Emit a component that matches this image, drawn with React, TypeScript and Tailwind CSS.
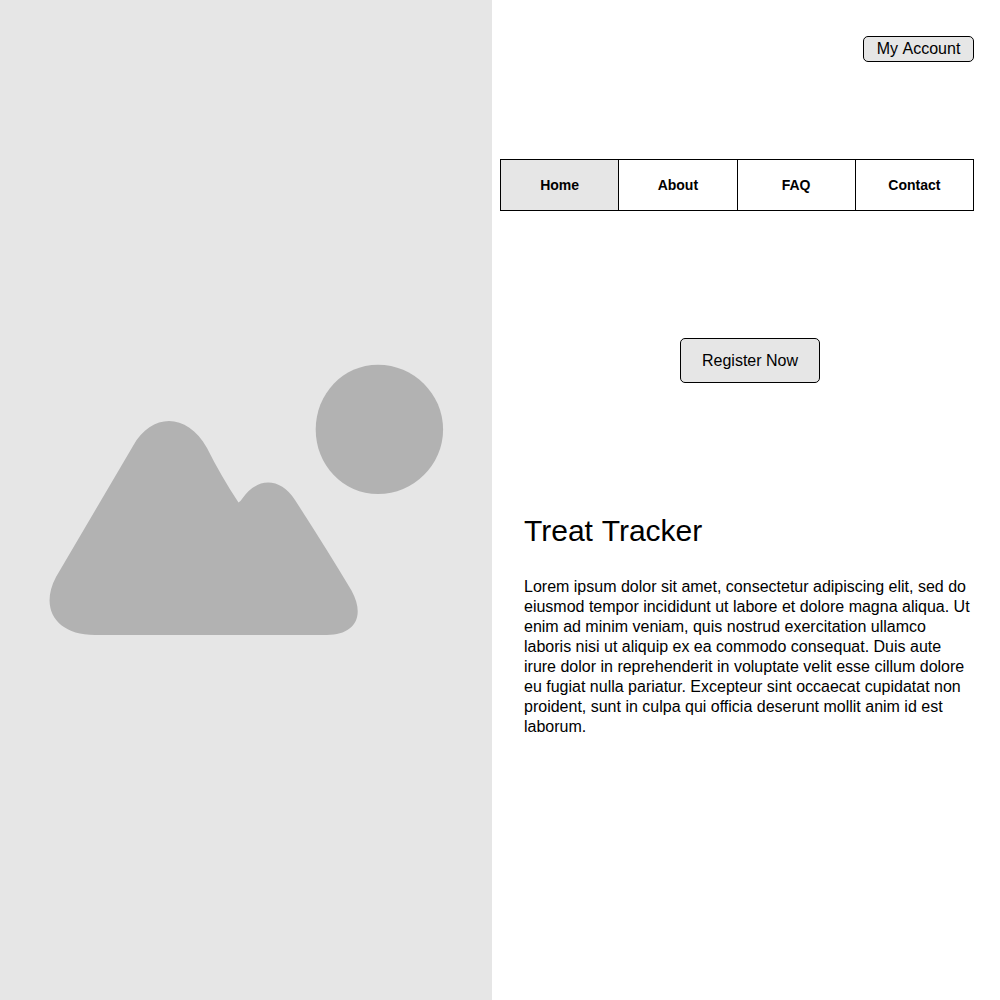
const navItems = ["Home", "About", "FAQ", "Contact"];

const description = [
  "Lorem ipsum dolor sit amet, consectetur adipiscing elit, sed do",
  "eiusmod tempor incididunt ut labore et dolore magna aliqua. Ut",
  "enim ad minim veniam, quis nostrud exercitation ullamco",
  "laboris nisi ut aliquip ex ea commodo consequat. Duis aute",
  "irure dolor in reprehenderit in voluptate velit esse cillum dolore",
  "eu fugiat nulla pariatur. Excepteur sint occaecat cupidatat non",
  "proident, sunt in culpa qui officia deserunt mollit anim id est",
  "laborum.",
];

function Landscape() {
  return (
    <svg viewBox="0 0 492 1000" className="block h-full w-full" fill="#b2b2b2" aria-hidden="true">
      <path d="M378 364.8 C413.5 364.8 443.1 394 443.1 429.5 C443.1 465 413.5 494.1 378 494.1 C343 494.1 315.7 465 315.7 429.5 C315.7 394 343 364.8 378 364.8 Z" />
      <path d="M133 446 C152 412.5 187 412.5 207 448 C216 466 227 485 238.5 502.5 Q240 502 242 499 C257 477 280 477 295 500 C315 531 334 561 351.5 590.5 C366 617 354 635 327 635 H95 C55.5 635 39.5 608 56 577 Z" />
    </svg>
  );
}

export default function App() {
  return (
    <div className="flex h-[1000px] w-[1000px] bg-white font-['Liberation_Sans',Arial,sans-serif] text-black">
      <aside className="w-[492px] shrink-0 bg-[#e6e6e6]">
        <Landscape />
      </aside>
      <main className="flex flex-1 flex-col pt-9 pr-[26px] pl-2">
        <button className="h-[26px] w-[111px] self-end rounded-[5px] border border-black bg-[#e6e6e6] text-base leading-6 [word-spacing:1px]">
          My Account
        </button>
        <nav className="mt-[97px] flex h-[52px] divide-x divide-black border border-black text-sm font-bold">
          {navItems.map((item, index) => (
            <a
              key={item}
              href="#"
              className={`flex flex-1 items-center justify-center ${index === 0 ? "bg-[#e6e6e6]" : "bg-white"}`}
            >
              {item}
            </a>
          ))}
        </nav>
        <button className="mt-[127px] ml-[180px] h-[45px] w-[140px] rounded-[5px] border border-black bg-[#e6e6e6] text-base">
          Register Now
        </button>
        <section className="mt-[130px] pl-6">
          <h1 className="text-3xl leading-9 [word-spacing:1px]">Treat Tracker</h1>
          <p className="mt-7 text-base leading-5 whitespace-nowrap">
            {description.map((line) => (
              <span key={line} className="block">{line}</span>
            ))}
          </p>
        </section>
      </main>
    </div>
  );
}
